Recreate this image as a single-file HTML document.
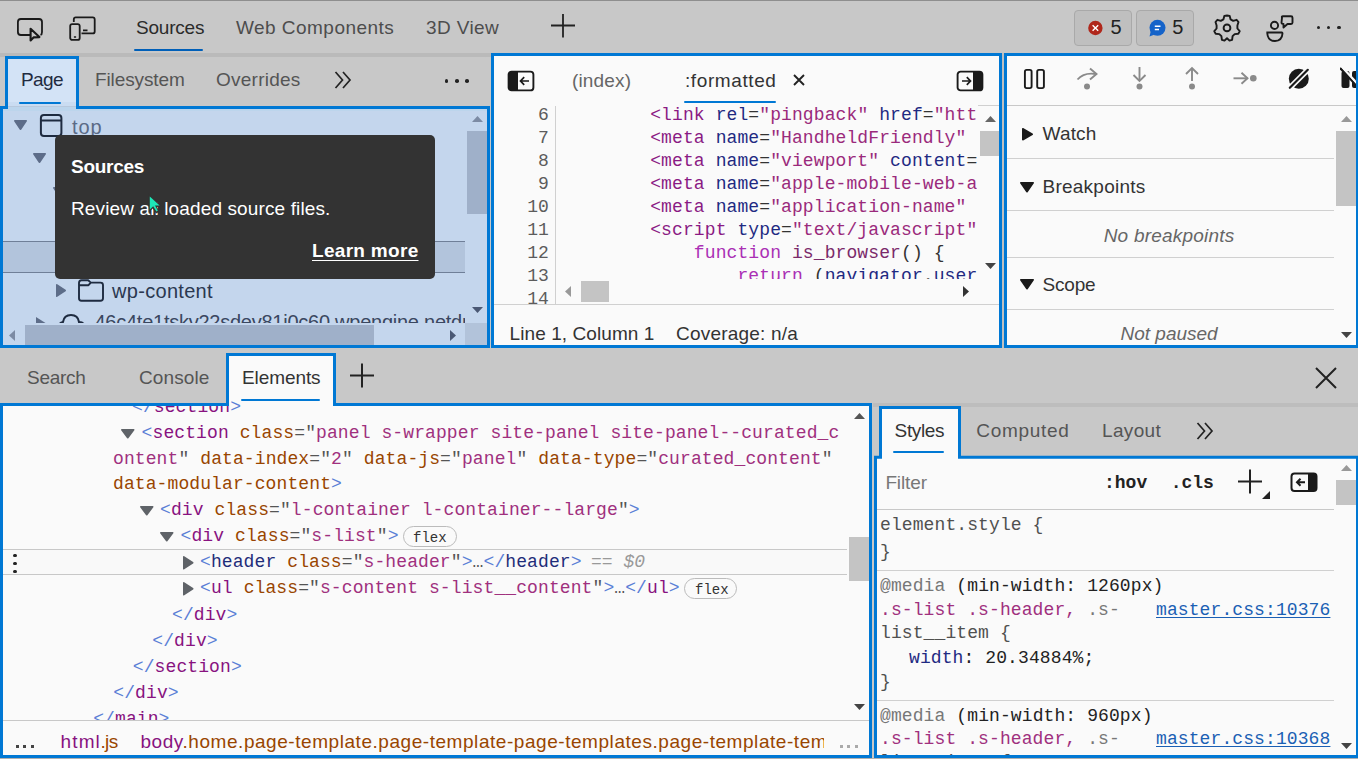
<!DOCTYPE html>
<html><head><meta charset="utf-8"><style>
html,body{margin:0;padding:0;width:1358px;height:759px;overflow:hidden;position:relative;background:#c8c8c8}
</style></head><body>
<div style="position:absolute;left:0px;top:0px;width:1358px;height:759px;background:#c8c8c8"></div>
<div style="position:absolute;left:0px;top:0px;width:1358px;height:1px;background:#8e8e8e"></div>
<div style="position:absolute;left:0px;top:53px;width:1358px;height:4px;background:#bababa"></div>
<div style="position:absolute;left:0px;top:57px;width:490px;height:49px;background:#c8c8c8;border-top-right-radius:6px"></div>
<div style="position:absolute;left:3px;top:106px;width:484px;height:239px;background:#c4d6ed"></div>
<div style="position:absolute;left:8px;top:59px;width:68px;height:50px;background:#d3e3f6"></div>
<div style="position:absolute;left:8px;top:101.5px;width:68px;height:4.5px;background:#cadcf1"></div>
<div style="position:absolute;left:3px;top:106px;width:484px;height:5px;background:#bcd5ec"></div>
<div style="position:absolute;left:8px;top:106px;width:68px;height:1px;background:#b8c9dd"></div>
<svg style="position:absolute;left:0;top:0" width="1358" height="759"><path d="M1.5 107.5 H6.5 V57.5 H77.5 V107.5 H488.5 V346.5 H1.5 Z" fill="none" stroke="#0078d4" stroke-width="3"/></svg>
<div style="position:absolute;left:21.00px;top:70.32px;font-family:'Liberation Sans', sans-serif;font-size:19px;font-weight:400;font-style:normal;line-height:19px;color:#1f2b40;white-space:pre;letter-spacing:-0.569px;">Page</div>
<div style="position:absolute;left:19px;top:102px;width:42px;height:2px;background:#0078d4;border-radius:1px"></div>
<div style="position:absolute;left:95.00px;top:70.32px;font-family:'Liberation Sans', sans-serif;font-size:19px;font-weight:400;font-style:normal;line-height:19px;color:#555;white-space:pre;letter-spacing:-0.120px;">Filesystem</div>
<div style="position:absolute;left:216.00px;top:70.32px;font-family:'Liberation Sans', sans-serif;font-size:19px;font-weight:400;font-style:normal;line-height:19px;color:#555;white-space:pre;letter-spacing:0.249px;">Overrides</div>
<svg style="position:absolute;left:333px;top:70px" width="22" height="20"><path d="M2.5 2 L9.5 10 L2.5 18 M10 2 L17 10 L10 18" fill="none" stroke="#222" stroke-width="1.7"/></svg>
<div style="position:absolute;left:444.8px;top:79.2px;width:3.6px;height:3.6px;border-radius:50%;background:#222"></div>
<div style="position:absolute;left:455.0px;top:79.2px;width:3.6px;height:3.6px;border-radius:50%;background:#222"></div>
<div style="position:absolute;left:465.2px;top:79.2px;width:3.6px;height:3.6px;border-radius:50%;background:#222"></div>
<svg style="position:absolute;left:12.5px;top:119.3px" width="15" height="12"><path d="M1.8 1.8 H13.2 L7.5 10.2 Z" fill="#5d6d89" stroke="#5d6d89" stroke-width="1.6" stroke-linejoin="round"/></svg>
<svg style="position:absolute;left:39px;top:113px" width="25" height="25"><rect x="1.9" y="1.9" width="20.5" height="21" rx="3" fill="none" stroke="#1e2b40" stroke-width="2"/><path d="M2 7.5 H22" stroke="#1e2b40" stroke-width="2"/></svg>
<div style="position:absolute;left:72.00px;top:116.57px;font-family:'Liberation Sans', sans-serif;font-size:20px;font-weight:400;font-style:normal;line-height:20px;color:#5a6a86;white-space:pre;letter-spacing:0.896px;">top</div>
<svg style="position:absolute;left:32px;top:152.3px" width="15" height="12"><path d="M1.8 1.8 H13.2 L7.5 10.2 Z" fill="#5d6d89" stroke="#5d6d89" stroke-width="1.6" stroke-linejoin="round"/></svg>
<svg style="position:absolute;left:52px;top:186px" width="15" height="12"><path d="M1.8 1.8 H13.2 L7.5 10.2 Z" fill="#5d6d89" stroke="#5d6d89" stroke-width="1.6" stroke-linejoin="round"/></svg>
<div style="position:absolute;left:3px;top:241px;width:462px;height:32px;background:#b2c4dc;border-top:1px solid #6f7f98;border-bottom:1px solid #6f7f98;box-sizing:border-box"></div>
<svg style="position:absolute;left:55px;top:283px" width="12" height="15"><path d="M1.8 1.8 L10.2 7.5 L1.8 13.2 Z" fill="#5d6d89" stroke="#5d6d89" stroke-width="1.6" stroke-linejoin="round"/></svg>
<svg style="position:absolute;left:77px;top:279px" width="29" height="24"><path d="M2 4 Q2 1.3 4.5 1.3 H11.2 L13.8 3.6 H23.5 Q26 3.6 26 6.1 V19.2 Q26 21.7 23.5 21.7 H4.5 Q2 21.7 2 19.2 Z M2 6.2 H11.5 L13.8 3.6" fill="none" stroke="#1e2b40" stroke-width="1.9" stroke-linejoin="round"/></svg>
<div style="position:absolute;left:112.00px;top:280.87px;font-family:'Liberation Sans', sans-serif;font-size:20px;font-weight:400;font-style:normal;line-height:20px;color:#2b3850;white-space:pre;letter-spacing:0.306px;">wp-content</div>
<div style="position:absolute;left:3px;top:300px;width:462px;height:23px;overflow:hidden"><svg style="position:absolute;left:33px;top:16.5px" width="10" height="12"><path d="M0 0 L9.5 6 L0 12 Z" fill="#5d6d89"/></svg><svg style="position:absolute;left:55px;top:12px" width="28" height="20"><path d="M4 18 Q1 18 1 14 Q1 11 5 10 Q6 3 13 3 Q20 3 21 10 Q26 10 26 14 Q26 18 23 18" fill="none" stroke="#1e2b40" stroke-width="2"/></svg><div style="position:absolute;left:91.5px;top:12px;font-family:'Liberation Sans', sans-serif;font-size:20px;line-height:20px;color:#3a4760;white-space:pre;letter-spacing:-0.25px">46c4te1tskv22sdev81i0c60.wpengine.netdna-ssl.com</div></div>
<svg style="position:absolute;left:472px;top:116px" width="11" height="6"><path d="M0 6 H11 L5.5 0 Z" fill="#7c8ba4"/></svg>
<div style="position:absolute;left:467px;top:131px;width:20px;height:83px;background:#9fb0c9"></div>
<svg style="position:absolute;left:472px;top:307px" width="11" height="6"><path d="M0 0 H11 L5.5 6 Z" fill="#4a5874"/></svg>
<div style="position:absolute;left:3px;top:323px;width:462px;height:22px;background:#c4d6ed"></div>
<svg style="position:absolute;left:9px;top:330px" width="6" height="11"><path d="M6 0 L0 5.5 L6 11 Z" fill="#7c8ba4"/></svg>
<div style="position:absolute;left:25px;top:325px;width:349px;height:20px;background:#9fb0c9"></div>
<svg style="position:absolute;left:450px;top:330px" width="6" height="11"><path d="M0 0 L6 5.5 L0 11 Z" fill="#4a5874"/></svg>
<div style="position:absolute;left:465px;top:323px;width:22px;height:22px;background:#b2c3da"></div>
<div style="position:absolute;left:55px;top:135px;width:380px;height:144px;background:#333;border-radius:5px"></div>
<div style="position:absolute;left:71.00px;top:156.92px;font-family:'Liberation Sans', sans-serif;font-size:19px;font-weight:700;font-style:normal;line-height:19px;color:#fff;white-space:pre;letter-spacing:-0.283px;">Sources</div>
<div style="position:absolute;left:71.00px;top:198.92px;font-family:'Liberation Sans', sans-serif;font-size:19px;font-weight:400;font-style:normal;line-height:19px;color:#fff;white-space:pre;letter-spacing:0.127px;">Review all loaded source files.</div>
<div style="position:absolute;left:312.00px;top:241.22px;font-family:'Liberation Sans', sans-serif;font-size:19px;font-weight:700;font-style:normal;line-height:19px;color:#fff;white-space:pre;letter-spacing:0.302px;text-decoration:underline;text-underline-offset:3px">Learn more</div>
<svg style="position:absolute;left:140px;top:190px" width="30" height="30"><path d="M8.6 3.8 V22.5 L12.8 18.6 L16 23.5 L19.6 21.8 L16.8 17 L22.3 16.6 Z" fill="#333"/><path d="M9.8 6.4 V19.4 L13.2 16.2 L16.4 21.4 L17.8 20.6 L15 15.6 L19.6 15.4 Z" fill="#1de8b7"/></svg>
<div style="position:absolute;left:491px;top:53px;width:511px;height:295px;background:#fafafa;border:3px solid #0078d4;box-sizing:border-box"></div>
<svg style="position:absolute;left:507px;top:70px" width="28" height="22"><rect x="1.6" y="1.6" width="24.8" height="18.8" rx="3" fill="#fafafa" stroke="#1a1a1a" stroke-width="1.9"/><path d="M1.6 4.6 Q1.6 1.6 4.6 1.6 H11 V20.4 H4.6 Q1.6 20.4 1.6 17.4 Z" fill="#1a1a1a"/><path d="M22 11 H13.5 M17.2 7.2 L13.5 11 L17.2 14.8" fill="none" stroke="#1a1a1a" stroke-width="1.7"/></svg>
<div style="position:absolute;left:572.00px;top:70.52px;font-family:'Liberation Sans', sans-serif;font-size:19px;font-weight:400;font-style:normal;line-height:19px;color:#666;white-space:pre;letter-spacing:0.146px;">(index)</div>
<div style="position:absolute;left:685.00px;top:70.52px;font-family:'Liberation Sans', sans-serif;font-size:19px;font-weight:400;font-style:normal;line-height:19px;color:#333;white-space:pre;letter-spacing:0.595px;">:formatted</div>
<div style="position:absolute;left:684px;top:101px;width:92px;height:2px;background:#0078d4;border-radius:1px"></div>
<svg style="position:absolute;left:792px;top:73px" width="14" height="14"><path d="M2 2 L12 12 M12 2 L2 12" stroke="#222" stroke-width="1.9"/></svg>
<svg style="position:absolute;left:956px;top:70px" width="28" height="22"><rect x="1.6" y="1.6" width="24.8" height="18.8" rx="3" fill="#fafafa" stroke="#1a1a1a" stroke-width="1.9"/><path d="M17 1.6 H23.4 Q26.4 1.6 26.4 4.6 V17.4 Q26.4 20.4 23.4 20.4 H17 Z" fill="#1a1a1a"/><path d="M6 11 H14.5 M10.8 7.2 L14.5 11 L10.8 14.8" fill="none" stroke="#1a1a1a" stroke-width="1.7"/></svg>
<div style="position:absolute;left:555px;top:106px;width:1px;height:198px;background:#d0d0d0"></div>
<div style="position:absolute;left:978px;top:105px;width:21px;height:1px;background:#d0d0d0"></div>
<div style="position:absolute;left:494px;top:304px;width:505px;height:1px;background:#d0d0d0"></div>
<div style="position:absolute;left:494px;top:106px;width:483px;height:172.5px;overflow:hidden">
<div style="position:absolute;left:69px;top:0.40px;font-family:'Liberation Mono', monospace;font-size:18px;line-height:18px;white-space:pre;letter-spacing:0.1px"><span style="color:#333">        </span><span style="color:#8a1a84">&lt;link</span><span style="color:#333"> </span><span style="color:#1f2a82">rel</span><span style="color:#333">=</span><span style="color:#9a2a7c">&quot;pingback&quot;</span><span style="color:#333"> </span><span style="color:#1f2a82">href</span><span style="color:#333">=</span><span style="color:#9a2a7c">&quot;htt</span><span style="color:#9a2a7c">p:</span></div>
<div style="position:absolute;left:69px;top:23.40px;font-family:'Liberation Mono', monospace;font-size:18px;line-height:18px;white-space:pre;letter-spacing:0.1px"><span style="color:#333">        </span><span style="color:#8a1a84">&lt;meta</span><span style="color:#333"> </span><span style="color:#1f2a82">name</span><span style="color:#333">=</span><span style="color:#9a2a7c">&quot;HandheldFriendly&quot;</span><span style="color:#333"> </span><span style="color:#1f2a82">content</span></div>
<div style="position:absolute;left:69px;top:46.40px;font-family:'Liberation Mono', monospace;font-size:18px;line-height:18px;white-space:pre;letter-spacing:0.1px"><span style="color:#333">        </span><span style="color:#8a1a84">&lt;meta</span><span style="color:#333"> </span><span style="color:#1f2a82">name</span><span style="color:#333">=</span><span style="color:#9a2a7c">&quot;viewport&quot;</span><span style="color:#333"> </span><span style="color:#1f2a82">content</span><span style="color:#333">=</span><span style="color:#9a2a7c">&quot;</span></div>
<div style="position:absolute;left:69px;top:69.40px;font-family:'Liberation Mono', monospace;font-size:18px;line-height:18px;white-space:pre;letter-spacing:0.1px"><span style="color:#333">        </span><span style="color:#8a1a84">&lt;meta</span><span style="color:#333"> </span><span style="color:#1f2a82">name</span><span style="color:#333">=</span><span style="color:#9a2a7c">&quot;apple-mobile-web-app</span></div>
<div style="position:absolute;left:69px;top:92.40px;font-family:'Liberation Mono', monospace;font-size:18px;line-height:18px;white-space:pre;letter-spacing:0.1px"><span style="color:#333">        </span><span style="color:#8a1a84">&lt;meta</span><span style="color:#333"> </span><span style="color:#1f2a82">name</span><span style="color:#333">=</span><span style="color:#9a2a7c">&quot;application-name&quot;</span><span style="color:#333"> </span><span style="color:#1f2a82">content</span></div>
<div style="position:absolute;left:69px;top:115.40px;font-family:'Liberation Mono', monospace;font-size:18px;line-height:18px;white-space:pre;letter-spacing:0.1px"><span style="color:#333">        </span><span style="color:#8a1a84">&lt;script</span><span style="color:#333"> </span><span style="color:#1f2a82">type</span><span style="color:#333">=</span><span style="color:#9a2a7c">&quot;text/javascript&quot;</span><span style="color:#8a1a84">&gt;</span></div>
<div style="position:absolute;left:69px;top:138.40px;font-family:'Liberation Mono', monospace;font-size:18px;line-height:18px;white-space:pre;letter-spacing:0.1px"><span style="color:#333">            </span><span style="color:#aa2fb5">function</span><span style="color:#333"> </span><span style="color:#7a2a6a">is_browser</span><span style="color:#333">() {</span></div>
<div style="position:absolute;left:69px;top:161.40px;font-family:'Liberation Mono', monospace;font-size:18px;line-height:18px;white-space:pre;letter-spacing:0.1px"><span style="color:#333">                </span><span style="color:#aa2fb5">return</span><span style="color:#333"> (</span><span style="color:#1f2a82">navigator</span><span style="color:#333">.</span><span style="color:#1f2a82">userAgent</span></div>
</div>
<div style="position:absolute;left:494px;top:106px;width:60px;height:198px;overflow:hidden">
<div style="position:absolute;left:0;top:0.40px;width:55px;text-align:right;font-family:'Liberation Mono', monospace;font-size:18px;line-height:18px;color:#5c5c5c;letter-spacing:0.1px">6</div>
<div style="position:absolute;left:0;top:23.40px;width:55px;text-align:right;font-family:'Liberation Mono', monospace;font-size:18px;line-height:18px;color:#5c5c5c;letter-spacing:0.1px">7</div>
<div style="position:absolute;left:0;top:46.40px;width:55px;text-align:right;font-family:'Liberation Mono', monospace;font-size:18px;line-height:18px;color:#5c5c5c;letter-spacing:0.1px">8</div>
<div style="position:absolute;left:0;top:69.40px;width:55px;text-align:right;font-family:'Liberation Mono', monospace;font-size:18px;line-height:18px;color:#5c5c5c;letter-spacing:0.1px">9</div>
<div style="position:absolute;left:0;top:92.40px;width:55px;text-align:right;font-family:'Liberation Mono', monospace;font-size:18px;line-height:18px;color:#5c5c5c;letter-spacing:0.1px">10</div>
<div style="position:absolute;left:0;top:115.40px;width:55px;text-align:right;font-family:'Liberation Mono', monospace;font-size:18px;line-height:18px;color:#5c5c5c;letter-spacing:0.1px">11</div>
<div style="position:absolute;left:0;top:138.40px;width:55px;text-align:right;font-family:'Liberation Mono', monospace;font-size:18px;line-height:18px;color:#5c5c5c;letter-spacing:0.1px">12</div>
<div style="position:absolute;left:0;top:161.40px;width:55px;text-align:right;font-family:'Liberation Mono', monospace;font-size:18px;line-height:18px;color:#5c5c5c;letter-spacing:0.1px">13</div>
<div style="position:absolute;left:0;top:184.40px;width:55px;text-align:right;font-family:'Liberation Mono', monospace;font-size:18px;line-height:18px;color:#5c5c5c;letter-spacing:0.1px">14</div>
</div>
<svg style="position:absolute;left:985px;top:116px" width="11" height="6"><path d="M0 6 H11 L5.5 0 Z" fill="#666"/></svg>
<div style="position:absolute;left:980px;top:131px;width:19px;height:25px;background:#c4c4c4"></div>
<svg style="position:absolute;left:985px;top:263px" width="11" height="6"><path d="M0 0 H11 L5.5 6 Z" fill="#444"/></svg>
<svg style="position:absolute;left:565px;top:286px" width="6" height="11"><path d="M6 0 L0 5.5 L6 11 Z" fill="#999"/></svg>
<div style="position:absolute;left:581px;top:281px;width:28px;height:21px;background:#c4c4c4"></div>
<svg style="position:absolute;left:963px;top:286px" width="6" height="11"><path d="M0 0 L6 5.5 L0 11 Z" fill="#333"/></svg>
<div style="position:absolute;left:509.60px;top:324.42px;font-family:'Liberation Sans', sans-serif;font-size:19px;font-weight:400;font-style:normal;line-height:19px;color:#333;white-space:pre;letter-spacing:0.078px;">Line 1, Column 1</div>
<div style="position:absolute;left:676.00px;top:324.42px;font-family:'Liberation Sans', sans-serif;font-size:19px;font-weight:400;font-style:normal;line-height:19px;color:#333;white-space:pre;letter-spacing:0.203px;">Coverage: n/a</div>
<div style="position:absolute;left:1004px;top:53px;width:355px;height:295px;background:#fafafa;border:3px solid #0078d4;box-sizing:border-box"></div>
<div style="position:absolute;left:1002px;top:53px;width:2px;height:295px;background:#c0c0c0"></div>
<div style="position:absolute;left:1007px;top:105px;width:349px;height:1px;background:#c8c8c8"></div>
<svg style="position:absolute;left:1022px;top:67px" width="24" height="23"><rect x="2.9" y="2.9" width="6.7" height="18.2" rx="1.8" fill="none" stroke="#1a1a1a" stroke-width="1.9"/><rect x="15.2" y="2.9" width="6.7" height="18.2" rx="1.8" fill="none" stroke="#1a1a1a" stroke-width="1.9"/></svg>
<svg style="position:absolute;left:1074px;top:64px" width="28" height="28"><path d="M3.5 15.5 Q10 8 22 10" fill="none" stroke="#8a8a8a" stroke-width="1.9"/><path d="M16 4.5 L22.5 10 L16 15.5" fill="none" stroke="#8a8a8a" stroke-width="1.9"/><circle cx="13" cy="22.6" r="3" fill="#8a8a8a"/></svg>
<svg style="position:absolute;left:1128px;top:64px" width="24" height="28"><path d="M11.5 3 V16" stroke="#8a8a8a" stroke-width="1.9"/><path d="M5.5 11 L11.5 17 L17.5 11" fill="none" stroke="#8a8a8a" stroke-width="1.9"/><circle cx="11.5" cy="22.6" r="3" fill="#8a8a8a"/></svg>
<svg style="position:absolute;left:1180px;top:64px" width="24" height="28"><path d="M12 4 V17" stroke="#8a8a8a" stroke-width="1.9"/><path d="M6 10 L12 4 L18 10" fill="none" stroke="#8a8a8a" stroke-width="1.9"/><circle cx="12" cy="22.6" r="3" fill="#8a8a8a"/></svg>
<svg style="position:absolute;left:1230px;top:68px" width="30" height="22"><path d="M3.5 10.3 H17.5" stroke="#8a8a8a" stroke-width="1.9"/><path d="M11.5 4.8 L17.5 10.3 L11.5 15.8" fill="none" stroke="#8a8a8a" stroke-width="1.9"/><circle cx="23.3" cy="10.3" r="3.3" fill="#8a8a8a"/></svg>
<svg style="position:absolute;left:1286px;top:66px" width="26" height="26"><circle cx="12.8" cy="12.8" r="10" fill="#1a1a1a"/><path d="M1 24.6 L24.6 1" stroke="#fafafa" stroke-width="5.5"/><path d="M3.8 21.8 L21.8 3.8" stroke="#1a1a1a" stroke-width="2.2" stroke-linecap="round"/></svg>
<div style="position:absolute;left:1340px;top:66px;width:16px;height:26px;overflow:hidden"><svg width="26" height="26"><path d="M1 2 L22 24" stroke="#1a1a1a" stroke-width="2"/><rect x="1.5" y="5" width="8" height="17" rx="2" fill="#1a1a1a"/><rect x="12" y="5" width="8" height="17" rx="2" fill="#1a1a1a"/><path d="M1 0 L24 25" stroke="#fafafa" stroke-width="2.5"/><path d="M0 2 L23 27" stroke="#1a1a1a" stroke-width="2"/></svg></div>
<svg style="position:absolute;left:1021px;top:127px" width="13" height="14.5"><path d="M1.8 1.8 L11.2 7.25 L1.8 12.7 Z" fill="#1a1a1a" stroke="#1a1a1a" stroke-width="1.6" stroke-linejoin="round"/></svg>
<div style="position:absolute;left:1042.50px;top:123.92px;font-family:'Liberation Sans', sans-serif;font-size:19px;font-weight:400;font-style:normal;line-height:19px;color:#333;white-space:pre;letter-spacing:0.172px;">Watch</div>
<div style="position:absolute;left:1007px;top:158px;width:327px;height:1px;background:#d0d0d0"></div>
<svg style="position:absolute;left:1018.5px;top:180.5px" width="16" height="12.5"><path d="M1.8 1.8 H14.2 L8.0 10.7 Z" fill="#1a1a1a" stroke="#1a1a1a" stroke-width="1.6" stroke-linejoin="round"/></svg>
<div style="position:absolute;left:1042.50px;top:176.92px;font-family:'Liberation Sans', sans-serif;font-size:19px;font-weight:400;font-style:normal;line-height:19px;color:#333;white-space:pre;letter-spacing:0.241px;">Breakpoints</div>
<div style="position:absolute;left:1007px;top:210px;width:327px;height:1px;background:#d0d0d0"></div>
<div style="position:absolute;left:1103.70px;top:225.62px;font-family:'Liberation Sans', sans-serif;font-size:19px;font-weight:400;font-style:italic;line-height:19px;color:#666;white-space:pre;letter-spacing:0.215px;">No breakpoints</div>
<div style="position:absolute;left:1007px;top:257px;width:327px;height:1px;background:#d0d0d0"></div>
<svg style="position:absolute;left:1018.5px;top:277.5px" width="16" height="12.5"><path d="M1.8 1.8 H14.2 L8.0 10.7 Z" fill="#1a1a1a" stroke="#1a1a1a" stroke-width="1.6" stroke-linejoin="round"/></svg>
<div style="position:absolute;left:1042.50px;top:274.92px;font-family:'Liberation Sans', sans-serif;font-size:19px;font-weight:400;font-style:normal;line-height:19px;color:#333;white-space:pre;letter-spacing:-0.195px;">Scope</div>
<div style="position:absolute;left:1007px;top:309px;width:327px;height:1px;background:#d0d0d0"></div>
<div style="position:absolute;left:1007px;top:310px;width:330px;height:35px;overflow:hidden">
<div style="position:absolute;left:113.5px;top:14.42px;font-family:'Liberation Sans', sans-serif;font-size:19px;line-height:19px;font-style:italic;color:#666;white-space:pre">Not paused</div>
</div>
<svg style="position:absolute;left:1341px;top:116px" width="11" height="6"><path d="M0 6 H11 L5.5 0 Z" fill="#999"/></svg>
<div style="position:absolute;left:1336px;top:131px;width:20px;height:75px;background:#c4c4c4"></div>
<svg style="position:absolute;left:1341px;top:332px" width="11" height="6"><path d="M0 0 H11 L5.5 6 Z" fill="#444"/></svg>
<div style="position:absolute;left:27.00px;top:367.92px;font-family:'Liberation Sans', sans-serif;font-size:19px;font-weight:400;font-style:normal;line-height:19px;color:#555;white-space:pre;letter-spacing:-0.284px;">Search</div>
<div style="position:absolute;left:139.00px;top:367.92px;font-family:'Liberation Sans', sans-serif;font-size:19px;font-weight:400;font-style:normal;line-height:19px;color:#555;white-space:pre;letter-spacing:0.112px;">Console</div>
<svg style="position:absolute;left:348px;top:362px" width="28" height="28"><path d="M14 1.5 V25.5 M2 13.5 H26" stroke="#222" stroke-width="2"/></svg>
<svg style="position:absolute;left:1314px;top:366px" width="24" height="24"><path d="M2 2 L22 22 M22 2 L2 22" stroke="#222" stroke-width="2"/></svg>
<div style="position:absolute;left:3px;top:406px;width:866px;height:349px;background:#fafafa"></div>
<div style="position:absolute;left:229px;top:356px;width:104px;height:50px;background:#fafafa"></div>
<svg style="position:absolute;left:0;top:0" width="1358" height="759"><path d="M1.5 404.5 H227.5 V354.5 H334.5 V404.5 H870.5 V756.5 H1.5 Z" fill="none" stroke="#0078d4" stroke-width="3"/></svg>
<div style="position:absolute;left:0px;top:758px;width:1358px;height:1px;background:#b0b0b0"></div>
<div style="position:absolute;left:242.00px;top:367.92px;font-family:'Liberation Sans', sans-serif;font-size:19px;font-weight:400;font-style:normal;line-height:19px;color:#333;white-space:pre;letter-spacing:-0.088px;">Elements</div>
<div style="position:absolute;left:241px;top:399px;width:79px;height:2px;background:#0078d4;border-radius:1px"></div>
<div style="position:absolute;left:3px;top:549px;width:844px;height:26px;background:#f9f9f9;border-top:1px solid #c8c8c8;border-bottom:1px solid #c8c8c8;box-sizing:border-box"></div>
<div style="position:absolute;left:13px;top:553.7px;width:3.6px;height:3.6px;border-radius:50%;background:#222"></div>
<div style="position:absolute;left:13px;top:561.7px;width:3.6px;height:3.6px;border-radius:50%;background:#222"></div>
<div style="position:absolute;left:13px;top:569.7px;width:3.6px;height:3.6px;border-radius:50%;background:#222"></div>
<div style="position:absolute;left:3px;top:406px;width:845px;height:314px;overflow:hidden">
<div style="position:absolute;left:129.00px;top:-7.80px;font-family:'Liberation Mono', monospace;font-size:18px;line-height:18px;white-space:pre;letter-spacing:0.1px"><span style="color:#5a7fd6">&lt;/</span><span style="color:#881280">section</span><span style="color:#5a7fd6">&gt;</span></div>
<div style="position:absolute;left:138.60px;top:18.20px;font-family:'Liberation Mono', monospace;font-size:18px;line-height:18px;white-space:pre;letter-spacing:0.1px"><span style="color:#5a7fd6">&lt;</span><span style="color:#881280">section</span><span style="color:#555"> </span><span style="color:#994500">class</span><span style="color:#555">=&quot;</span><span style="color:#a0307e">panel s-wrapper site-panel site-panel--curated_c</span></div>
<div style="position:absolute;left:110.00px;top:43.70px;font-family:'Liberation Mono', monospace;font-size:18px;line-height:18px;white-space:pre;letter-spacing:0.1px"><span style="color:#a0307e">ontent</span><span style="color:#555">&quot;</span><span style="color:#555"> </span><span style="color:#994500">data-index</span><span style="color:#555">=&quot;</span><span style="color:#a0307e">2</span><span style="color:#555">&quot;</span><span style="color:#555"> </span><span style="color:#994500">data-js</span><span style="color:#555">=&quot;</span><span style="color:#a0307e">panel</span><span style="color:#555">&quot;</span><span style="color:#555"> </span><span style="color:#994500">data-type</span><span style="color:#555">=&quot;</span><span style="color:#a0307e">curated_content</span><span style="color:#555">&quot;</span></div>
<div style="position:absolute;left:110.00px;top:69.20px;font-family:'Liberation Mono', monospace;font-size:18px;line-height:18px;white-space:pre;letter-spacing:0.1px"><span style="color:#994500">data-modular-content</span><span style="color:#5a7fd6">&gt;</span></div>
<div style="position:absolute;left:157.00px;top:95.20px;font-family:'Liberation Mono', monospace;font-size:18px;line-height:18px;white-space:pre;letter-spacing:0.1px"><span style="color:#5a7fd6">&lt;</span><span style="color:#881280">div</span><span style="color:#555"> </span><span style="color:#994500">class</span><span style="color:#555">=&quot;</span><span style="color:#a0307e">l-container l-container--large</span><span style="color:#555">&quot;</span><span style="color:#5a7fd6">&gt;</span></div>
<div style="position:absolute;left:177.50px;top:121.20px;font-family:'Liberation Mono', monospace;font-size:18px;line-height:18px;white-space:pre;letter-spacing:0.1px"><span style="color:#5a7fd6">&lt;</span><span style="color:#881280">div</span><span style="color:#555"> </span><span style="color:#994500">class</span><span style="color:#555">=&quot;</span><span style="color:#a0307e">s-list</span><span style="color:#555">&quot;</span><span style="color:#5a7fd6">&gt;</span></div>
<div style="position:absolute;left:197.00px;top:147.20px;font-family:'Liberation Mono', monospace;font-size:18px;line-height:18px;white-space:pre;letter-spacing:0.1px"><span style="color:#5a7fd6">&lt;</span><span style="color:#1f2d7a">header</span><span style="color:#555"> </span><span style="color:#994500">class</span><span style="color:#555">=&quot;</span><span style="color:#a0307e">s-header</span><span style="color:#555">&quot;</span><span style="color:#5a7fd6">&gt;</span><span style="color:#555">…</span><span style="color:#5a7fd6">&lt;/</span><span style="color:#1f2d7a">header</span><span style="color:#5a7fd6">&gt;</span></div>
<div style="position:absolute;left:197.00px;top:173.20px;font-family:'Liberation Mono', monospace;font-size:18px;line-height:18px;white-space:pre;letter-spacing:0.1px"><span style="color:#5a7fd6">&lt;</span><span style="color:#881280">ul</span><span style="color:#555"> </span><span style="color:#994500">class</span><span style="color:#555">=&quot;</span><span style="color:#a0307e">s-content s-list__content</span><span style="color:#555">&quot;</span><span style="color:#5a7fd6">&gt;</span><span style="color:#555">…</span><span style="color:#5a7fd6">&lt;/</span><span style="color:#881280">ul</span><span style="color:#5a7fd6">&gt;</span></div>
<div style="position:absolute;left:169.00px;top:200.10px;font-family:'Liberation Mono', monospace;font-size:18px;line-height:18px;white-space:pre;letter-spacing:0.1px"><span style="color:#5a7fd6">&lt;/</span><span style="color:#881280">div</span><span style="color:#5a7fd6">&gt;</span></div>
<div style="position:absolute;left:149.30px;top:226.10px;font-family:'Liberation Mono', monospace;font-size:18px;line-height:18px;white-space:pre;letter-spacing:0.1px"><span style="color:#5a7fd6">&lt;/</span><span style="color:#881280">div</span><span style="color:#5a7fd6">&gt;</span></div>
<div style="position:absolute;left:129.80px;top:252.10px;font-family:'Liberation Mono', monospace;font-size:18px;line-height:18px;white-space:pre;letter-spacing:0.1px"><span style="color:#5a7fd6">&lt;/</span><span style="color:#881280">section</span><span style="color:#5a7fd6">&gt;</span></div>
<div style="position:absolute;left:110.30px;top:278.10px;font-family:'Liberation Mono', monospace;font-size:18px;line-height:18px;white-space:pre;letter-spacing:0.1px"><span style="color:#5a7fd6">&lt;/</span><span style="color:#881280">div</span><span style="color:#5a7fd6">&gt;</span></div>
<div style="position:absolute;left:90.20px;top:304.10px;font-family:'Liberation Mono', monospace;font-size:18px;line-height:18px;white-space:pre;letter-spacing:0.1px"><span style="color:#5a7fd6">&lt;/</span><span style="color:#881280">main</span><span style="color:#5a7fd6">&gt;</span></div>
</div>
<div style="position:absolute;left:229px;top:396px;width:104px;height:10px;overflow:hidden">
<div style="position:absolute;left:-97.00px;top:2.20px;font-family:'Liberation Mono', monospace;font-size:18px;line-height:18px;white-space:pre;letter-spacing:0.1px"><span style="color:#5a7fd6">&lt;/</span><span style="color:#881280">section</span><span style="color:#5a7fd6">&gt;</span></div>
</div>
<div style="position:absolute;left:591.00px;top:553.20px;font-family:'Liberation Mono', monospace;font-size:18px;font-weight:400;font-style:italic;line-height:18px;color:#999;white-space:pre;letter-spacing:0.000px;">== $0</div>
<svg style="position:absolute;left:119.5px;top:427.5px" width="15.5" height="11.5"><path d="M1.8 1.8 H13.7 L7.75 9.7 Z" fill="#5f6368" stroke="#5f6368" stroke-width="1.6" stroke-linejoin="round"/></svg>
<svg style="position:absolute;left:139px;top:504.5px" width="15.5" height="11.5"><path d="M1.8 1.8 H13.7 L7.75 9.7 Z" fill="#5f6368" stroke="#5f6368" stroke-width="1.6" stroke-linejoin="round"/></svg>
<svg style="position:absolute;left:158.5px;top:531px" width="15.5" height="11.5"><path d="M1.8 1.8 H13.7 L7.75 9.7 Z" fill="#5f6368" stroke="#5f6368" stroke-width="1.6" stroke-linejoin="round"/></svg>
<svg style="position:absolute;left:181.5px;top:555.2px" width="12.5" height="15.5"><path d="M1.8 1.8 L10.7 7.75 L1.8 13.7 Z" fill="#5f6368" stroke="#5f6368" stroke-width="1.6" stroke-linejoin="round"/></svg>
<svg style="position:absolute;left:181.5px;top:581.2px" width="12.5" height="15.5"><path d="M1.8 1.8 L10.7 7.75 L1.8 13.7 Z" fill="#5f6368" stroke="#5f6368" stroke-width="1.6" stroke-linejoin="round"/></svg>
<div style="position:absolute;left:403px;top:525.5px;width:54px;height:21px;border:1px solid #bbb;border-radius:11px;box-sizing:border-box;background:#fafafa"></div>
<div style="position:absolute;left:684px;top:578px;width:53px;height:21px;border:1px solid #bbb;border-radius:11px;box-sizing:border-box;background:#fafafa"></div>
<div style="position:absolute;left:413.00px;top:530.77px;font-family:'Liberation Mono', monospace;font-size:14px;font-weight:400;font-style:normal;line-height:14px;color:#333;white-space:pre;letter-spacing:0.000px;">flex</div>
<div style="position:absolute;left:695.00px;top:582.77px;font-family:'Liberation Mono', monospace;font-size:14px;font-weight:400;font-style:normal;line-height:14px;color:#333;white-space:pre;letter-spacing:0.000px;">flex</div>
<svg style="position:absolute;left:854px;top:413px" width="11" height="6"><path d="M0 6 H11 L5.5 0 Z" fill="#555"/></svg>
<div style="position:absolute;left:849px;top:537px;width:20px;height:44px;background:#c4c4c4"></div>
<svg style="position:absolute;left:854px;top:704px" width="11" height="6"><path d="M0 0 H11 L5.5 6 Z" fill="#444"/></svg>
<div style="position:absolute;left:3px;top:720px;width:866px;height:1px;background:#c8c8c8"></div>
<div style="position:absolute;left:15.5px;top:744.5px;width:3.0px;height:3.0px;background:#444"></div>
<div style="position:absolute;left:23.0px;top:744.5px;width:3.0px;height:3.0px;background:#444"></div>
<div style="position:absolute;left:30.5px;top:744.5px;width:3.0px;height:3.0px;background:#444"></div>
<div style="position:absolute;left:60.50px;top:731.92px;font-family:'Liberation Sans', sans-serif;font-size:19px;font-weight:400;font-style:normal;line-height:19px;color:#881280;white-space:pre;letter-spacing:1.148px;">html</div>
<div style="position:absolute;left:100.50px;top:731.92px;font-family:'Liberation Sans', sans-serif;font-size:19px;font-weight:400;font-style:normal;line-height:19px;color:#994500;white-space:pre;letter-spacing:-0.667px;">.js</div>
<div style="position:absolute;left:138px;top:725px;width:686px;height:30px;overflow:hidden">
<div style="position:absolute;left:2.5px;top:6.92px;font-family:'Liberation Sans', sans-serif;font-size:19px;line-height:19px;color:#994500;white-space:pre;letter-spacing:0.55px"><span style="color:#881280">body</span>.home.page-template.page-template-page-templates.page-template-templates</div>
</div>
<div style="position:absolute;left:839.5px;top:744.5px;width:3.0px;height:3.0px;background:#aaa"></div>
<div style="position:absolute;left:847.0px;top:744.5px;width:3.0px;height:3.0px;background:#aaa"></div>
<div style="position:absolute;left:854.5px;top:744.5px;width:3.0px;height:3.0px;background:#aaa"></div>
<div style="position:absolute;left:873px;top:403px;width:485px;height:4px;background:#bdbdbd"></div>
<div style="position:absolute;left:877px;top:458px;width:479px;height:297px;background:#fafafa"></div>
<div style="position:absolute;left:882px;top:409px;width:76px;height:49px;background:#fafafa"></div>
<svg style="position:absolute;left:0;top:0" width="1358" height="759"><path d="M875.5 457.3 H880.5 V407.5 H959.5 V457.3 H1357.5 V756.5 H875.5 Z" fill="none" stroke="#0078d4" stroke-width="3"/></svg>
<div style="position:absolute;left:894.60px;top:421.42px;font-family:'Liberation Sans', sans-serif;font-size:19px;font-weight:400;font-style:normal;line-height:19px;color:#333;white-space:pre;letter-spacing:-0.375px;">Styles</div>
<div style="position:absolute;left:893px;top:451px;width:51px;height:2px;background:#0078d4;border-radius:1px"></div>
<div style="position:absolute;left:976.30px;top:421.42px;font-family:'Liberation Sans', sans-serif;font-size:19px;font-weight:400;font-style:normal;line-height:19px;color:#555;white-space:pre;letter-spacing:0.691px;">Computed</div>
<div style="position:absolute;left:1102.00px;top:421.42px;font-family:'Liberation Sans', sans-serif;font-size:19px;font-weight:400;font-style:normal;line-height:19px;color:#555;white-space:pre;letter-spacing:0.342px;">Layout</div>
<svg style="position:absolute;left:1195px;top:421px" width="22" height="20"><path d="M2.5 2 L9.5 10 L2.5 18 M10 2 L17 10 L10 18" fill="none" stroke="#222" stroke-width="1.7"/></svg>
<div style="position:absolute;left:885.40px;top:472.62px;font-family:'Liberation Sans', sans-serif;font-size:19px;font-weight:400;font-style:normal;line-height:19px;color:#777;white-space:pre;letter-spacing:-0.122px;">Filter</div>
<div style="position:absolute;left:1104.00px;top:473.90px;font-family:'Liberation Mono', monospace;font-size:18px;font-weight:700;font-style:normal;line-height:18px;color:#222;white-space:pre;letter-spacing:0.000px;">:hov</div>
<div style="position:absolute;left:1170.70px;top:473.90px;font-family:'Liberation Mono', monospace;font-size:18px;font-weight:700;font-style:normal;line-height:18px;color:#222;white-space:pre;letter-spacing:0.000px;">.cls</div>
<svg style="position:absolute;left:1236px;top:468px" width="36" height="34"><path d="M14 1.5 V25.5 M2 13.5 H26" stroke="#222" stroke-width="2"/><path d="M34 23 V31 H26 Z" fill="#222"/></svg>
<svg style="position:absolute;left:1290px;top:472px" width="28" height="23"><rect x="1.5" y="1.5" width="25" height="17.5" rx="3" fill="#fafafa" stroke="#1a1a1a" stroke-width="2"/><path d="M18 1.5 H23.5 Q26.5 1.5 26.5 4.5 V16 Q26.5 19 23.5 19 H18 Z" fill="#1a1a1a"/><path d="M15 10.2 H7 M10.5 6.7 L7 10.2 L10.5 13.7" fill="none" stroke="#1a1a1a" stroke-width="2"/></svg>
<div style="position:absolute;left:877px;top:509px;width:457px;height:1px;background:#c8c8c8"></div>
<svg style="position:absolute;left:1341px;top:465px" width="11" height="6"><path d="M0 6 H11 L5.5 0 Z" fill="#999"/></svg>
<div style="position:absolute;left:1336px;top:480px;width:20px;height:25px;background:#c4c4c4"></div>
<svg style="position:absolute;left:1341px;top:743px" width="11" height="6"><path d="M0 0 H11 L5.5 6 Z" fill="#444"/></svg>
<div style="position:absolute;left:877px;top:510px;width:459px;height:245px;overflow:hidden">
<div style="position:absolute;left:3.00px;top:6.20px;font-family:'Liberation Mono', monospace;font-size:18px;line-height:18px;white-space:pre;letter-spacing:0.1px"><span style="color:#505050">element.style {</span></div>
<div style="position:absolute;left:3.00px;top:33.20px;font-family:'Liberation Mono', monospace;font-size:18px;line-height:18px;white-space:pre;letter-spacing:0.1px"><span style="color:#505050">}</span></div>
<div style="position:absolute;left:3.00px;top:67.20px;font-family:'Liberation Mono', monospace;font-size:18px;line-height:18px;white-space:pre;letter-spacing:0.1px"><span style="color:#777">@media</span><span style="color:#222"> (min-width: 1260px)</span></div>
<div style="position:absolute;left:3.00px;top:90.60px;font-family:'Liberation Mono', monospace;font-size:18px;line-height:18px;white-space:pre;letter-spacing:0.1px"><span style="color:#a0307e">.s-list .s-header, </span><span style="color:#777">.s-</span></div>
<div style="position:absolute;left:3.00px;top:113.70px;font-family:'Liberation Mono', monospace;font-size:18px;line-height:18px;white-space:pre;letter-spacing:0.1px"><span style="color:#505050">list__item {</span></div>
<div style="position:absolute;left:32.00px;top:139.20px;font-family:'Liberation Mono', monospace;font-size:18px;line-height:18px;white-space:pre;letter-spacing:0.1px"><span style="color:#1f2a82">width</span><span style="color:#222">: 20.34884%;</span></div>
<div style="position:absolute;left:3.00px;top:162.50px;font-family:'Liberation Mono', monospace;font-size:18px;line-height:18px;white-space:pre;letter-spacing:0.1px"><span style="color:#505050">}</span></div>
<div style="position:absolute;left:3.00px;top:197.20px;font-family:'Liberation Mono', monospace;font-size:18px;line-height:18px;white-space:pre;letter-spacing:0.1px"><span style="color:#777">@media</span><span style="color:#222"> (min-width: 960px)</span></div>
<div style="position:absolute;left:3.00px;top:220.10px;font-family:'Liberation Mono', monospace;font-size:18px;line-height:18px;white-space:pre;letter-spacing:0.1px"><span style="color:#a0307e">.s-list .s-header, </span><span style="color:#777">.s-</span></div>
<div style="position:absolute;left:3.00px;top:243.10px;font-family:'Liberation Mono', monospace;font-size:18px;line-height:18px;white-space:pre;letter-spacing:0.1px"><span style="color:#505050">list__item {</span></div>
<div style="position:absolute;left:279px;top:90.60px;font-family:'Liberation Mono', monospace;font-size:18px;line-height:18px;white-space:pre;letter-spacing:0.1px;color:#1a5fb4;text-decoration:underline;text-underline-offset:2px">master.css:10376</div>
<div style="position:absolute;left:279px;top:220.10px;font-family:'Liberation Mono', monospace;font-size:18px;line-height:18px;white-space:pre;letter-spacing:0.1px;color:#1a5fb4;text-decoration:underline;text-underline-offset:2px">master.css:10368</div>
</div>
<div style="position:absolute;left:877px;top:570px;width:457px;height:1px;background:#d0d0d0"></div>
<div style="position:absolute;left:877px;top:700px;width:457px;height:1px;background:#d0d0d0"></div>
<svg style="position:absolute;left:14px;top:15px" width="32" height="30"><path d="M17 20 H6.9 Q3.9 20 3.9 17 V7 Q3.9 4 6.9 4 H25 Q28 4 28 7 V17 Q28 19.5 26.5 20" fill="none" stroke="#1a1a1a" stroke-width="1.8"/><path d="M16.6 13.8 V25.4 L19.5 22.4 L25.4 22.1 Z" fill="none" stroke="#1a1a1a" stroke-width="2.1" stroke-linejoin="round"/></svg>
<svg style="position:absolute;left:67px;top:14px" width="32" height="30"><path d="M6.8 8 V5.4 Q6.8 3.4 8.8 3.4 H25.7 Q27.7 3.4 27.7 5.4 V17.4 Q27.7 19.4 25.7 19.4 H14.5" fill="none" stroke="#1a1a1a" stroke-width="1.8"/><rect x="3.2" y="10.1" width="9.5" height="15.8" rx="2" fill="none" stroke="#1a1a1a" stroke-width="1.8"/><path d="M6.9 23 H9.1 M16 16.4 H20.5" stroke="#1a1a1a" stroke-width="1.6"/></svg>
<div style="position:absolute;left:136.00px;top:17.92px;font-family:'Liberation Sans', sans-serif;font-size:19px;font-weight:400;font-style:normal;line-height:19px;color:#2b2b2b;white-space:pre;letter-spacing:-0.215px;">Sources</div>
<div style="position:absolute;left:134px;top:49px;width:69px;height:2px;background:#005fb8;border-radius:1px"></div>
<div style="position:absolute;left:236.00px;top:17.92px;font-family:'Liberation Sans', sans-serif;font-size:19px;font-weight:400;font-style:normal;line-height:19px;color:#4d4d4d;white-space:pre;letter-spacing:0.462px;">Web Components</div>
<div style="position:absolute;left:426.00px;top:17.92px;font-family:'Liberation Sans', sans-serif;font-size:19px;font-weight:400;font-style:normal;line-height:19px;color:#4d4d4d;white-space:pre;letter-spacing:0.385px;">3D View</div>
<svg style="position:absolute;left:549px;top:12px" width="28" height="28"><path d="M14 2 V25.5 M2 13.5 H26" stroke="#222" stroke-width="1.8"/></svg>
<div style="position:absolute;left:1074px;top:10px;width:58px;height:36px;background:#bfbfbf;border:1px solid #a9a9a9;border-radius:4px;box-sizing:border-box"></div>
<div style="position:absolute;left:1136px;top:10px;width:58px;height:36px;background:#bfbfbf;border:1px solid #a9a9a9;border-radius:4px;box-sizing:border-box"></div>
<svg style="position:absolute;left:1087px;top:20px" width="17" height="17"><circle cx="8.4" cy="8" r="7.2" fill="#b0271b"/><path d="M5.6 5.2 L11.2 10.8 M11.2 5.2 L5.6 10.8" stroke="#fff" stroke-width="1.4"/></svg>
<svg style="position:absolute;left:1148px;top:19px" width="19" height="19"><circle cx="9.5" cy="8.8" r="8" fill="#1563c9"/><path d="M1.5 17.5 L3 11 L8 15 Z" fill="#1563c9"/><path d="M6.8 7.2 H12.5 M6.8 10.5 H11" stroke="#fff" stroke-width="1.4"/></svg>
<div style="position:absolute;left:1110.50px;top:16.77px;font-family:'Liberation Sans', sans-serif;font-size:20px;font-weight:400;font-style:normal;line-height:20px;color:#222;white-space:pre;letter-spacing:0.000px;">5</div>
<div style="position:absolute;left:1172.20px;top:16.77px;font-family:'Liberation Sans', sans-serif;font-size:20px;font-weight:400;font-style:normal;line-height:20px;color:#222;white-space:pre;letter-spacing:0.000px;">5</div>
<svg style="position:absolute;left:1212px;top:13px" width="30" height="30"><path d="M15 2.5 L17.7 2.9 L18.6 6.4 L21.2 7.9 L24.6 6.8 L26.5 9 L25.4 12.5 L25.4 15.5 L27.7 18.2 L26.3 20.7 L22.7 21.1 L20.6 23.2 L20.1 26.8 L17.5 27.6 L15 25.2 L12.5 27.6 L9.9 26.8 L9.4 23.2 L7.3 21.1 L3.7 20.7 L2.3 18.2 L4.6 15.5 L4.6 12.5 L3.5 9 L5.4 6.8 L8.8 7.9 L11.4 6.4 L12.3 2.9 Z" fill="none" stroke="#1a1a1a" stroke-width="1.9" stroke-linejoin="round"/><circle cx="15" cy="14.9" r="3.4" fill="none" stroke="#1a1a1a" stroke-width="1.9"/></svg>
<svg style="position:absolute;left:1264px;top:13px" width="32" height="32"><circle cx="10.5" cy="12.4" r="3.6" fill="none" stroke="#1a1a1a" stroke-width="1.9"/><path d="M3.3 19.5 H17.8 Q18.5 19.5 18.5 20.5 Q18 28 11 28 Q4 28 3.3 20.5 Q3.3 19.5 3.3 19.5 Z" fill="none" stroke="#1a1a1a" stroke-width="1.9"/><path d="M18 4.7 Q17.3 3.2 19 3.2 H27 Q28.5 3.2 28.5 4.7 V9.5 Q28.5 11 27 11 H23.5 L19.5 14.5 V11 Q17.5 11 17.5 9.5 Z" fill="none" stroke="#1a1a1a" stroke-width="1.9" stroke-linejoin="round"/></svg>
<div style="position:absolute;left:1316.6000000000001px;top:25.9px;width:3.6px;height:3.6px;border-radius:50%;background:#222"></div>
<div style="position:absolute;left:1326.9px;top:25.9px;width:3.6px;height:3.6px;border-radius:50%;background:#222"></div>
<div style="position:absolute;left:1337.2px;top:25.9px;width:3.6px;height:3.6px;border-radius:50%;background:#222"></div>
</body></html>
